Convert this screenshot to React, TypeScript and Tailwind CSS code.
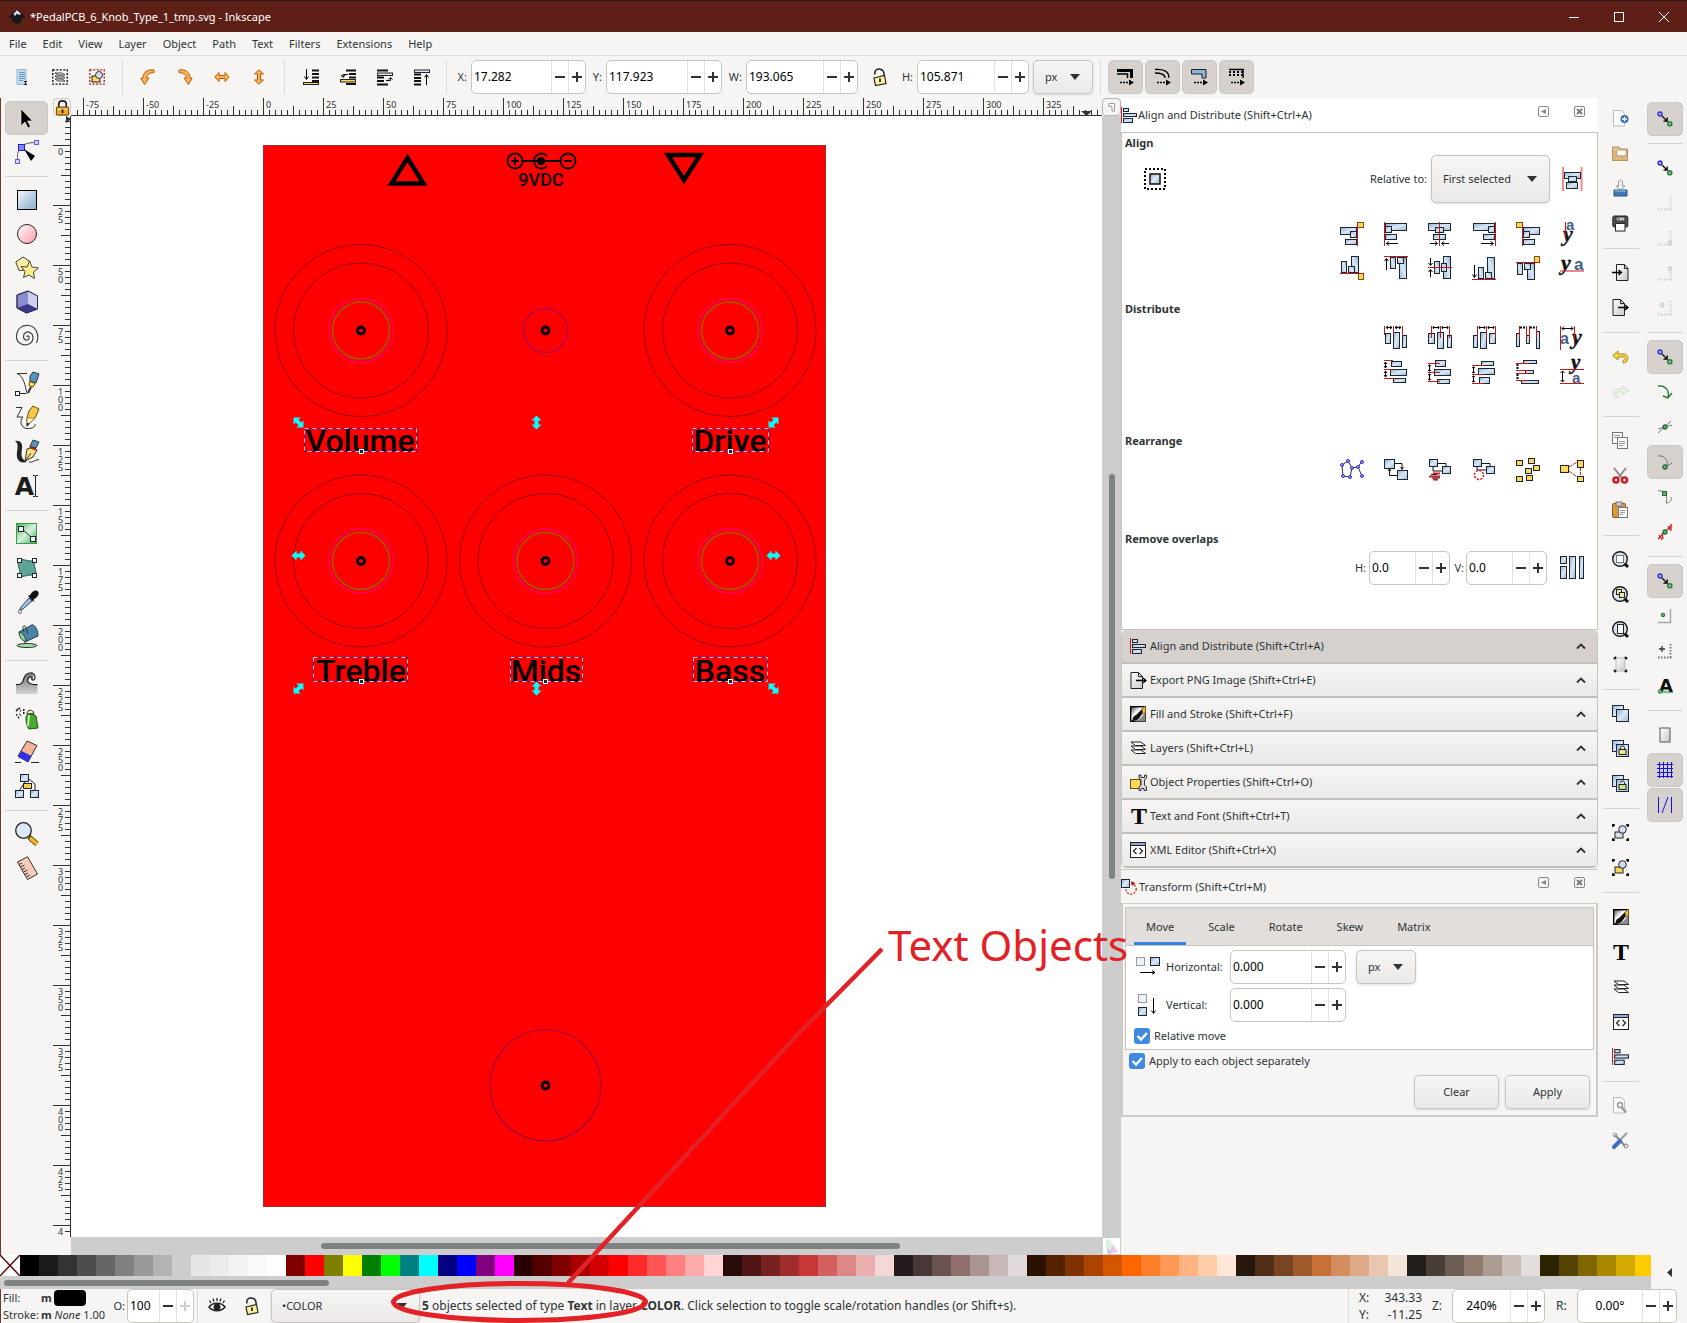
import React from "react";

type Kids = { children?: React.ReactNode };

const BLUE = "url(#g-blue)";
const GREEN = "url(#g-green)";
const YEL = "#ffd65c";
const INK = "#1d2733";
const CRIMSON = "#c01818";

function Defs() {
  return (
    <svg width="0" height="0" className="absolute" aria-hidden="true">
      <defs>
        <linearGradient id="g-blue" x1="0" y1="0" x2="1" y2="1">
          <stop offset="0" stopColor="#8fb0d0" />
          <stop offset="0.5" stopColor="#dbe8f5" />
          <stop offset="1" stopColor="#9dbbd9" />
        </linearGradient>
        <linearGradient id="g-sky" x1="0" y1="0" x2="1" y2="1">
          <stop offset="0" stopColor="#f4f8fc" />
          <stop offset="1" stopColor="#86aacb" />
        </linearGradient>
        <linearGradient id="g-pink" x1="0" y1="0" x2="1" y2="1">
          <stop offset="0" stopColor="#fff" />
          <stop offset="1" stopColor="#ff9aa6" />
        </linearGradient>
        <linearGradient id="g-green" x1="0" y1="0" x2="1" y2="1">
          <stop offset="0" stopColor="#3fae56" />
          <stop offset="0.5" stopColor="#d9f2dc" />
          <stop offset="1" stopColor="#3fae56" />
        </linearGradient>
        <linearGradient id="g-grey" x1="0" y1="0" x2="0" y2="1">
          <stop offset="0" stopColor="#777" />
          <stop offset="1" stopColor="#d2d2d2" />
        </linearGradient>
        <linearGradient id="g-paper" x1="0" y1="0" x2="1" y2="1">
          <stop offset="0" stopColor="#fff" />
          <stop offset="1" stopColor="#c9c9c9" />
        </linearGradient>
        <linearGradient id="g-ink" x1="0" y1="0" x2="1" y2="1">
          <stop offset="0" stopColor="#444" />
          <stop offset="0.4" stopColor="#fff" />
          <stop offset="1" stopColor="#fff" />
        </linearGradient>
      </defs>
    </svg>
  );
}

function Ic({ s = 24, v = 24, children }: Kids & { s?: number; v?: number }) {
  return (
    <svg width={s} height={s} viewBox={`0 0 ${v} ${v}`} fill="none" aria-hidden="true" className="shrink-0 overflow-visible">
      {children}
    </svg>
  );
}

/* x, y, width, height and fill of an outlined box */
function B({ b, f = BLUE, c = INK }: { b: number[]; f?: string; c?: string }) {
  return <rect x={b[0] + 0.5} y={b[1] + 0.5} width={b[2] - 1} height={b[3] - 1} fill={f} stroke={c} />;
}
function Boxes({ bs, f }: { bs: number[][]; f?: string }) {
  return (
    <>
      {bs.map((b, i) => (
        <B key={i} b={b} f={f} />
      ))}
    </>
  );
}

/* ---------- align and distribute glyphs ---------- */
const alignShapes: React.ReactNode[] = [
  <>
    <Boxes bs={[[0, 5, 17, 8], [10, 9, 7, 7], [5, 17, 12, 6]]} />
    <B b={[17, 0, 7, 6]} f={YEL} c="#7a5200" />
    <path d="M17.5 0V24" stroke={CRIMSON} />
  </>,
  <>
    <Boxes bs={[[1, 1, 22, 8], [1, 4, 7, 7], [1, 12, 12, 6]]} />
    <path d="M.5 0V24" stroke={CRIMSON} />
    <path d="M2 21.5H14M5 19.5L2.5 21.5L5 23.5" stroke="#000" />
  </>,
  <>
    <Boxes bs={[[0, 1, 23, 8], [7, 5, 9, 6], [5, 12, 13, 6]]} />
    <path d="M11.5 0V24" stroke={CRIMSON} />
    <path d="M2 21.5H9M14 21.5H21M7 19.5L9.5 21.5L7 23.5M16 19.5L13.5 21.5L16 23.5" stroke="#000" />
  </>,
  <>
    <Boxes bs={[[1, 1, 22, 8], [16, 4, 7, 7], [11, 12, 12, 6]]} />
    <path d="M23.5 0V24" stroke={CRIMSON} />
    <path d="M9 21.5H21M18.5 19.5L21.5 21.5L18.5 23.5" stroke="#000" />
  </>,
  <>
    <Boxes bs={[[7, 5, 17, 8], [7, 9, 7, 7], [7, 17, 12, 6]]} />
    <B b={[0, 0, 7, 6]} f={YEL} c="#7a5200" />
    <path d="M6.5 0V24" stroke={CRIMSON} />
  </>,
];
const distShapes: React.ReactNode[] = [
  <>
    <Boxes bs={[[1, 7, 6, 11], [9, 6, 7, 17], [18, 9, 5, 13]]} />
    <path d="M.5 0V9M9.5 0V9M18.5 0V10" stroke={CRIMSON} />
    <path d="M2 1.5H8M11 1.5H17M4 0L2 1.5L4 3M6 0L8 1.5L6 3M13 0L11 1.5L13 3M15 0L17 1.5L15 3" stroke="#000" />
  </>,
  <>
    <Boxes bs={[[0, 7, 7, 11], [9, 6, 7, 17], [19, 9, 5, 13]]} />
    <path d="M3.5 0V12M12.5 0V12M21.5 0V12" stroke={CRIMSON} />
    <path d="M5 1.5H11M14 1.5H20M6 0L5 1.5L6 3M10 0L11 1.5L10 3M15 0L14 1.5L15 3M19 0L20 1.5L19 3" stroke="#000" />
  </>,
  <>
    <Boxes bs={[[1, 9, 5, 13], [8, 6, 7, 17], [17, 7, 7, 11]]} />
    <path d="M5.5 0V12M14.5 0V12M23.5 0V12" stroke={CRIMSON} />
    <path d="M7 1.5H13M16 1.5H22M8 0L7 1.5L8 3M12 0L13 1.5L12 3M17 0L16 1.5L17 3M21 0L22 1.5L21 3" stroke="#000" />
  </>,
  <>
    <Boxes bs={[[0, 7, 4, 14], [10, 9, 4, 9], [20, 5, 4, 18]]} />
    <path d="M3.5 0V12M10.5 0V12M13.5 0V12M20.5 0V12" stroke={CRIMSON} />
    <path d="M4 1.5H10M14 1.5H20" stroke="#000" strokeWidth="2" strokeDasharray="2 1" />
  </>,
];

function Letters({ items, lines }: { items: [string, number, number, number][]; lines: React.ReactNode }) {
  return (
    <Ic>
      {items.map(([t, x, y, z], i) =>
        t === "a" ? (
          <text key={i} x={x} y={y} fontSize={z} fontWeight="700" fontFamily="Liberation Sans, sans-serif" fill="#3f6189">
            a
          </text>
        ) : (
          <text key={i} x={x} y={y} fontSize={z} fontWeight="700" fontStyle="italic" fontFamily="Liberation Serif, serif" fill="#111" stroke="#111" strokeWidth=".4">
            y
          </text>
        ),
      )}
      {lines}
    </Ic>
  );
}

/* ---------- general glyphs ---------- */
const AlignIcon = ({ s = 16 }: { s?: number }) => (
  <Ic s={s} v={16}>
    <path d="M.5 0V16" stroke="#d01c1c" />
    <Boxes bs={[[2, 1, 6, 4], [2, 6, 14, 4], [2, 11, 10, 5]]} />
  </Ic>
);
const ExportIcon = () => (
  <Ic s={17} v={17}>
    <path d="M1 .5H8.5L12.5 4.5V16.5H1Z" fill="url(#g-paper)" stroke="#222" />
    <path d="M8.5 .5V4.5H12.5" stroke="#222" />
    <path d="M6 8.5H16M13 6L16 8.5L13 11" stroke="#000" strokeWidth="1.3" />
  </Ic>
);
const ImportIcon = () => (
  <Ic s={17} v={17}>
    <path d="M4.5 .5H12.5L16 4.5V16.5H4.5Z" fill="url(#g-paper)" stroke="#222" />
    <path d="M12.5 .5V4.5H16" stroke="#222" />
    <path d="M0 8.5H9M6.5 6L9.5 8.5L6.5 11" stroke="#000" strokeWidth="1.3" />
  </Ic>
);
const FillIcon = () => (
  <Ic s={16} v={16}>
    <rect x=".7" y=".7" width="14.6" height="14.6" fill="url(#g-ink)" stroke="#000" strokeWidth="1.4" />
    <path d="M1 15.500C4 14 1.500 10.500 6 9L13 2L15 4L10 11C8 14.500 5 14.500 1 15.500Z" fill="#111" />
    <path d="M15.500 5V15.500H4C9 14.500 12 11 15.500 5Z" fill="#8a8a8a" />
    <path d="M12 3.500L15.500 0V6L13 8Z" fill="#f0c040" stroke="#7a5200" strokeWidth=".6" />
  </Ic>
);
const LayersIcon = () => (
  <Ic s={16} v={16}>
    {[10, 6, 2].map((y) => (
      <path key={y} d={`M1 ${y}H11L15.5 ${y + 3.5}H5.5Z`} fill="#fff" stroke="#222" strokeLinejoin="round" />
    ))}
  </Ic>
);
const PropsIcon = () => (
  <Ic s={17} v={17}>
    <B b={[0, 5, 11, 10]} f="#ffd75a" c="#6b4b00" />
    <path d="M9 1V4L11 6V11L9 13V16.5H11V14.5H14V16.5H16.5V13L14.5 11V6L16.5 4V1H14.5V3.5H11V1Z" fill="#ddd" stroke="#333" />
  </Ic>
);
const TIcon = () => (
  <Ic s={18} v={18}>
    <text x="9" y="17" fontSize="24" fontWeight="700" textAnchor="middle" fontFamily="Liberation Serif, serif" fill="#000">
      T
    </text>
  </Ic>
);
const XmlIcon = () => (
  <Ic s={16} v={16}>
    <rect x=".5" y=".5" width="15" height="15" fill="#fdfdfd" stroke="#222" />
    <path d="M1 2H15" stroke="#90a8d8" strokeWidth="2" />
    <path d="M0 3.5H16" stroke="#222" />
    <path d="M6.5 6L3.5 9L6.5 12M9.5 6L12.5 9L9.5 12" stroke="#222" strokeWidth="1.2" />
  </Ic>
);
const TransformIcon = () => (
  <Ic s={17} v={17}>
    <circle cx="10" cy="11" r="5.2" stroke="#d01c1c" strokeDasharray="2 1.4" strokeWidth="1.2" />
    <B b={[0, 1, 9, 9]} />
    <path d="M10 3L14 5L11.5 8Z" fill="#b00" />
  </Ic>
);
const Padlock = ({ s = 18, open }: { s?: number; open?: boolean }) => (
  <Ic s={s} v={18}>
    {open ? (
      <>
        <path d="M4 6.5C3 2 6 .8 8.5 1C12 1.5 13.5 4 13 8" stroke="#222" strokeWidth="1.5" />
        <path d="M3 10L13.5 7.5L15 15.5L4.5 17.5Z" fill="#fbf1a0" stroke="#222" strokeWidth="1.2" />
        <path d="M9 10.5V14" stroke="#222" strokeWidth="1.8" />
      </>
    ) : (
      <>
        <path d="M5 9V5.5C5 .8 13 .8 13 5.5V9" stroke="#222" strokeWidth="1.8" />
        <rect x="2.5" y="8.5" width="13" height="8.5" rx="1" fill="#f2a92c" stroke="#5a3600" />
        <path d="M3.5 11H14.5" stroke="#ffe9a0" />
        <path d="M9 11V15" stroke="#222" strokeWidth="2" />
      </>
    )}
  </Ic>
);
const SnapGlyph = () => (
  <Ic s={16} v={16}>
    <circle cx="3" cy="3" r="2" fill="#a9a9ff" stroke="#3030d0" strokeWidth="1.4" />
    <circle cx="12.8" cy="12.8" r="2.1" fill="#7fc08f" stroke="#2a7a3c" strokeWidth="1.4" />
    <path d="M5 5L9.5 9.5M6.5 10.2H10.2V6.5" stroke="#000" strokeWidth="1.3" />
  </Ic>
);
const Corner = ({ x, y, faint = true, children }: Kids & { x?: number; y?: number; faint?: boolean }) => (
  <Ic s={16} v={16}>
    <g opacity={faint ? 0.28 : 1}>
      <path d="M1 14.5H14.5M13.5 1V14" stroke="#777" strokeWidth="2" strokeDasharray="1.6 1.4" />
      {x !== undefined && y !== undefined && <circle cx={x} cy={y} r="2" fill="#7fc08f" stroke="#2a7a3c" />}
    </g>
    {children}
  </Ic>
);
const Lens = ({ children }: Kids) => (
  <Ic s={17} v={17}>
    <circle cx="8" cy="8" r="7.3" fill="#d6e4f2" stroke="#1a1a1a" strokeWidth="1.4" />
    <path d="M12.5 12.5L16 16" stroke="#111" strokeWidth="3" />
    {children}
  </Ic>
);
const Clones = ({ children }: Kids) => (
  <Ic s={17} v={17}>
    <Boxes bs={[[0, 0, 12, 12], [4, 4, 13, 13]]} />
    {children}
  </Ic>
);
const GroupIcon = ({ f }: { f: string }) => (
  <Ic s={17} v={17}>
    <path d="M0 1H3M0 16H3M14 1H17M14 16H17M1 0V3M16 0V3M1 14V17M16 14V17" stroke="#000" strokeWidth="1.5" />
    <rect x="3" y="8" width="8" height="6" fill={f} stroke="#222" />
    <circle cx="10.5" cy="5.5" r="3.8" fill="#cfdfee" stroke="#222" />
  </Ic>
);
const MiniDot = () => <circle cx="8" cy="8" r="2" fill="#5fb572" stroke="#1f6b31" strokeWidth="1.3" />;

/* ---------- toolbox ---------- */
const tools: (null | [string, React.ReactNode])[] = [
  ["Select", <path d="M6 3V20L10 16L13 22L15.500 20.500L12.500 15H17.500Z" fill="#000" stroke="#fff" strokeWidth=".6" />],
  ["Edit nodes", <>
    <path d="M2.500 20C2 10 4 3 20 2.500" stroke="#555" />
    <B b={[3, 4, 7, 7]} f="#7c84f0" c="#2020c8" />
    <B b={[19, 0, 5, 5]} f="#d5d5ff" c="#6060e0" />
    <B b={[0, 19, 5, 5]} f="#d5d5ff" c="#6060e0" />
    <path d="M9 9L20 16L16 21Z" fill="#000" />
  </>],
  null,
  ["Rectangle", <rect x="2.500" y="2.500" width="19" height="19" fill="url(#g-sky)" stroke="#000" />],
  ["Ellipse", <circle cx="12" cy="12" r="9.500" fill="url(#g-pink)" stroke="#222" />],
  ["Star", <>
    <path d="M.8 6L8 1L15 5.500L12.500 14L4 14.500Z" fill="#fbf0a8" stroke="#444" />
    <path d="M14.500 5L17 11L23.500 12L18.500 16L19.500 22.500L14 19L8.500 21.500L10 15.500L6 10.500L12 11Z" fill="#fbec8c" stroke="#444" />
  </>],
  ["3D box", <>
    <path d="M2 5L13 1L22.500 6V19L11.500 23L2 18Z" fill="#8c8cd0" stroke="#333358" />
    <path d="M13 1L22.500 6V19L13 14Z" fill="#cfcff2" />
    <path d="M2 18L13 14L22.500 19L11.500 23Z" fill="#3a3a88" />
    <path d="M2 5L13 1L22.500 6V19L11.500 23L2 18Z" stroke="#333358" />
  </>],
  ["Spiral", <path d="M12 13C12 11 15 12 14 14.500C13 17 8.500 16.500 8.500 12.500C8.500 8.500 12 7 15 8.500C19 10.500 19 17 15 19.500C9 23 1 19 1.500 12C2 4 8 .5 14 1.500C22 3 24.500 12 21.500 19" stroke="#444" strokeWidth="1.200" />],
  null,
  ["Bezier pen", <>
    <path d="M2 1.500H12M2 1.500C9 4 10 14 12 21.500" stroke="#333" />
    <path d="M5 21.500H11" stroke="#222" /><B b={[0, 19, 5, 5]} f="#fff" />
    <path d="M15 4L18 0L24 2L21 11L15 9Z" fill="#5a94b8" stroke="#1d3f55" />
    <path d="M14.500 9.500L20 11.500L18 15L14 13.500Z" fill="#ffe35a" stroke="#6b5200" /><path d="M16 15L13 21" stroke="#333" strokeWidth="2" />
  </>],
  ["Pencil", <>
    <path d="M1 1.500H7L2 11H8C4 15 6 22 12 22.500C18 23 21 20 20 18" stroke="#333" />
    <path d="M14 5L18 0L24 3L20 12L12 20V12Z" fill="#f7c948" stroke="#6b4b00" />
    <path d="M12 12L20 12L12 20Z" fill="#fdf3dd" stroke="#6b4b00" strokeWidth=".6" /><path d="M12 17V20.500L15 17.500Z" fill="#222" />
  </>],
  ["Calligraphy", <>
    <path d="M0 1C5 0 8 3 7 9C6 15 6 19 12 22C4 24 1 19 2 12C3 6 3 3 0 1Z" fill="#222" />
    <path d="M14 22C18 23 19 20 24 19.500" stroke="#333" />
    <path d="M12 9L18 7L22 10L18 17L10 21Z" fill="#fbe17a" stroke="#333" /><path d="M15 6L18 0L24 2L21 8Z" fill="#5a94b8" stroke="#1d3f55" /><path d="M14.500 7L21 9.500" stroke="#b02020" strokeWidth="2" /><path d="M11 20L16 13" stroke="#333" />
  </>],
  ["Text", <>
    <text x="9.500" y="21" fontSize="25" fontWeight="700" textAnchor="middle" fontFamily="DejaVu Sans, sans-serif" fill="#1c1c1c">A</text>
    <path d="M20.500 2V22M18 1.500H20L20.500 2L21 1.500H23M18 22.500H20L20.500 22L21 22.500H23" stroke="#222" />
  </>],
  null,
  ["Gradient", <>
    <rect x="1.500" y="1.500" width="20" height="20" fill={GREEN} stroke="#3c9b50" />
    <path d="M6 6L18 17" stroke="#333" /><B b={[3, 4, 6, 6]} f="#fff" /><B b={[15, 14, 6, 6]} f="#fff" />
  </>],
  ["Mesh", <>
    <path d="M4 4C9 2 14 7 20 4C17 10 23 14 20 20C14 17 9 22 4 20C7 14 1 10 4 4Z" fill="#5fa596" stroke="#33584f" />
    <Boxes bs={[[2, 2, 5, 5], [17, 2, 5, 5], [2, 17, 5, 5], [17, 17, 5, 5]]} f="#fff" />
  </>],
  ["Dropper", <>
    <path d="M14 8L17 11L8 19L5 20.500L6 17Z" fill="#9cc3e8" stroke="#2f4660" />
    <path d="M13 6L15 5C17 1 21 -1 23 1.500C25 4 22 8 19 9L18.500 12Z" fill="#111" />
    <path d="M5 19C3 21.500 3 24 5.500 23.500C7.500 23 6.500 21 5 19Z" fill="#d4e6f5" stroke="#444" strokeWidth=".8" />
  </>],
  ["Bucket", <>
    <ellipse cx="12" cy="21.500" rx="10" ry="2" fill="#9fe0a8" stroke="#333" />
    <path d="M4 8L17 .8C20 .8 23 6 23 12L11 17.500Z" fill="#4a85a8" stroke="#1d3f55" /><path d="M4 8C7 8 11 13 11 17.500C7 17 4 13 4 8Z" fill="#8fd49a" stroke="#333" />
    <path d="M9 8C7 3 8 1 10 2C12 4 12 8 13 10M10 17V20" stroke="#333" />
  </>],
  null,
  ["Tweak", <>
    <path d="M1 12.500C8 13 8 9 9 6C11 1 16 0 18 3C19 5 18 8 16.500 7C18 5 15 4 13.500 6C11 9 13 13 22.500 12.500V22H1Z" fill="url(#g-grey)" />
    <path d="M1 12.500C8 13 8 9 9 6C11 0 19 -1 20 5C20 8 18 9 16.500 7C18 5 15 4 13.500 6C11 9 13 13 22.500 12.500" stroke="#222" strokeWidth="1.200" />
  </>],
  ["Spray", <>
    <path d="M1 5L5 2M2 3L6 5M8 4H10M1 9L5 8M3 12L6 9M8 7H10" stroke="#222" strokeWidth="1.800" strokeDasharray="1.500 2" />
    <path d="M12 9C10 9 11 20 14 23L23 22L21 10C19 8 14 8 12 9Z" fill="#4aa832" stroke="#1d5c10" /><path d="M14 9L13 20" stroke="#bdf0a8" strokeWidth="2" /><path d="M12 8C12 3 18 3 19 7.500Z" fill="#f1e6b0" stroke="#333" />
  </>],
  ["Eraser", <>
    <path d="M12 1L22 5.500L13 22L3 16Z" fill="#f3b399" stroke="#333" /><path d="M6.500 11L16.500 16L13 22L3 17Z" fill="#3030e0" />
    <path d="M0 22.500H6M16 22.500H24" stroke="#222" />
  </>],
  ["Connector", <>
    <path d="M10 8L4 17M13 4L20 10V17" stroke="#222" />
    <Boxes bs={[[5, 0, 9, 8], [0, 16, 9, 8], [15, 16, 9, 8]]} /><B b={[8, 9, 9, 6]} f="#f6cc4a" />
  </>],
  null,
  ["Zoom", <>
    <path d="M14 15L22 22" stroke="#6b4b00" strokeWidth="5" /><path d="M15 16L22 22" stroke="#f5b630" strokeWidth="3.500" />
    <circle cx="8.500" cy="8.500" r="7.800" fill="#dde9f5" stroke="#222" strokeWidth="1.300" />
  </>],
  ["Measure", <>
    <path d="M2.500 6L12.500 .8L22.500 18L12.500 23.500Z" fill="#f6cdb8" stroke="#333" />
    <path d="M4 8.500L7 7M5.500 11L9.500 9M7 13.500L10 12M8.500 16L12.500 14M10 18.500L13 17M11.500 21L15 19" stroke="#333" />
  </>],
];

/* ---------- command bar ---------- */
const commands: (null | [string, React.ReactNode])[] = [
  ["New", <Ic s={17} v={17}><path d="M1.500 .5H9.500L12.500 3.500V16H1.500Z" fill="#fcfcfc" stroke="#bbb" /><circle cx="12.500" cy="9" r="4" fill="#2f6fb5" /><path d="M10 9H15M12.500 6.500V11.500" stroke="#fff" strokeWidth="1.300" /></Ic>],
  ["Open", <Ic s={17} v={17}><path d="M.5 2H7L8 4H15.500V15.500H.5Z" fill="#e3c08c" stroke="#b58e58" /><path d="M6 5H14V11H4V7Z" fill="#fafafa" stroke="#b0a080" strokeWidth=".8" /><path d="M.5 7V15.500H15.500V11H5V7Z" fill="#dcb67e" stroke="#b58e58" strokeWidth=".6" /></Ic>],
  ["Save", <Ic s={17} v={17}><path d="M6.500 1V6H4L8.500 10L13 6H10.500V1C9 -.2 8 -.2 6.500 1Z" fill="#eee" stroke="#999" /><path d="M2 10H15V16H2Z" fill="#3f79b8" stroke="#2a5688" /><path d="M3 11H14" stroke="#a8c8e8" /></Ic>],
  ["Print", <Ic s={17} v={17}><rect x=".8" y="1" width="15" height="11" rx="1.500" fill="#555" stroke="#222" /><rect x="4" y="2" width="9" height="4" fill="#ddd" stroke="#222" /><rect x="3.500" y="8.500" width="9.500" height="7.500" fill="#fff" stroke="#222" /><path d="M5 4H8M10 4H11" stroke="#333" /></Ic>],
  null,
  ["Import", <ImportIcon />],
  ["Export", <ExportIcon />],
  null,
  ["Undo", <Ic s={17} v={17}><path d="M6 3L.8 7.500L6 12V9H12C14 9 14 12 11 12.500V15C17 15 17.500 6 12 6H6Z" fill="#f3d54e" stroke="#b08a10" /></Ic>],
  ["Redo", <Ic s={17} v={17}><path opacity=".35" d="M11 3L16.200 7.500L11 12V9H5C3 9 3 12 6 12.500V15C0 15 -.5 6 5 6H11Z" fill="#d5ecd0" stroke="#86b37c" /></Ic>],
  null,
  ["Copy", <Ic s={17} v={17}><B b={[0, 0, 11, 12]} f="#fff" c="#777" /><B b={[5, 5, 11, 12]} f="#fff" c="#777" /><path d="M2 3.500H8M2 5.500H5M7 9.500H13M7 11.500H13M7 13.500H11" stroke="#999" /></Ic>],
  ["Cut", <Ic s={17} v={17}><path d="M2 1L10 11M14 1L6 11" stroke="#8b8b8b" strokeWidth="2" /><circle cx="4" cy="13" r="2.500" stroke="#cc1f2a" strokeWidth="2.500" /><circle cx="12.500" cy="13" r="2.500" stroke="#cc1f2a" strokeWidth="2.500" /></Ic>],
  ["Paste", <Ic s={17} v={17}><rect x=".5" y="1.500" width="13" height="14" rx="1" fill="#d99a3e" stroke="#8a5a18" /><rect x="4" y="0" width="6" height="4" fill="#ccc" stroke="#777" /><B b={[6, 5, 10, 11]} f="#fff" c="#777" /><path d="M8 8.500H13M8 10.500H13M8 12.500H11" stroke="#999" /></Ic>],
  null,
  ["Zoom selection", <Lens><rect x="4.500" y="4.500" width="7" height="7" fill="#fff" stroke="#000" strokeDasharray="1 1" /></Lens>],
  ["Zoom drawing", <Lens><B b={[4, 3, 6, 6]} f="#fbe98a" /><B b={[7, 6, 6, 6]} f="#fbe98a" /></Lens>],
  ["Zoom page", <Lens><B b={[5, 3, 7, 10]} f="#fff" /></Lens>],
  ["Zoom width", <Ic s={17} v={17}><rect x="4" y="2" width="9" height="13" fill="url(#g-paper)" stroke="#bbb" /><path d="M2 3L4 1M15 3L13 1M2 14L4 16M15 14L13 16" stroke="#111" strokeWidth="2.200" /></Ic>],
  null,
  ["Duplicate", <Clones />],
  ["Clone", <Clones><rect x="7" y="9.500" width="7" height="5" fill="#f5e37a" stroke="#222" /><path d="M8.500 9V7.500C8.500 5.500 12.500 5.500 12.500 7.500V9" stroke="#222" /></Clones>],
  ["Unlink clone", <Clones><rect x="7" y="9.500" width="7" height="5" fill="#cfe08a" stroke="#222" /><path d="M8.500 7.500C8.500 5.500 12.500 5.500 12.500 7.500V9" stroke="#222" /></Clones>],
  null,
  ["Group", <GroupIcon f="#cfdfee" />],
  ["Ungroup", <GroupIcon f="#f6d45a" />],
  null,
  ["Fill and Stroke", <FillIcon />],
  ["Text and Font", <TIcon />],
  ["Layers", <LayersIcon />],
  ["XML Editor", <XmlIcon />],
  ["Align and Distribute", <AlignIcon s={17} />],
  null,
  ["Document properties", <Ic s={17} v={17}><path d="M1.500 .5H9.500L12.500 3.500V16H1.500Z" fill="#fafafa" stroke="#bbb" /><circle cx="8" cy="8" r="2.500" stroke="#999" strokeWidth="1.500" /><path d="M9.500 10L14 15.500" stroke="#999" strokeWidth="2.500" /></Ic>],
  ["Preferences", <Ic s={17} v={17}><path d="M3 3L13 14" stroke="#888" strokeWidth="2.200" /><circle cx="3" cy="3" r="2" stroke="#999" /><circle cx="14" cy="14" r="2" stroke="#888" /><path d="M15 1L8 8" stroke="#999" strokeWidth="2" /><path d="M8 9L2 15" stroke="#3d6ec0" strokeWidth="4" strokeLinecap="round" /></Ic>],
];

/* ---------- snap bar: name, glyph, pressed ---------- */
const snaps: (null | [string, React.ReactNode, boolean?])[] = [
  ["Snap", <SnapGlyph />, true],
  null,
  ["Snap bounding boxes", <SnapGlyph />],
  ["Snap edges", <Corner />],
  ["Snap corners", <Corner x={13} y={13} />],
  ["Snap edge midpoints", <Corner x={13} y={4} />],
  ["Snap centers", <Corner x={5} y={5} />],
  null,
  ["Snap nodes", <SnapGlyph />, true],
  ["Snap paths", <Ic s={16} v={16}><path d="M1 2C8 1 13 6 11 14M6 12L11 14L15 9" stroke="#227a2a" strokeWidth="1.400" /></Ic>],
  ["Snap intersections", <Ic s={16} v={16}><path d="M1 14L14 2M1 10L15 6" stroke="#777" /><MiniDot /></Ic>],
  ["Snap cusp nodes", <Ic s={16} v={16}><path d="M1 2C6 1 12 5 10 12L15 9" stroke="#777" /><circle cx="8" cy="13" r="2" fill="#5fb572" stroke="#1f6b31" strokeWidth="1.300" /></Ic>, true],
  ["Snap smooth nodes", <Ic s={16} v={16}><path d="M1 2C9 0 11 9 9 14C13 14 15 11 14 8" stroke="#777" /><B b={[5, 2, 5, 5]} f="#5fb572" c="#1f6b31" /></Ic>],
  ["Snap line midpoints", <Ic s={16} v={16}><path d="M2 11L5 16M5 9L6 15M1 15L6 10M10 6L15 1M11 2L14 7M14 0V6" stroke="#c22" strokeWidth="1.300" /><MiniDot /></Ic>],
  null,
  ["Snap others", <SnapGlyph />, true],
  ["Snap object centers", <Ic s={16} v={16}><path d="M1 14.500H13.500V1" stroke="#aaa" strokeWidth="1.500" /><circle cx="6" cy="7" r="1.800" fill="#5fb572" stroke="#1f6b31" /></Ic>],
  ["Snap rotation centers", <Corner faint={false}><path d="M2 6H8M5 3V9" stroke="#333" strokeWidth="1.300" /></Corner>],
  ["Snap text baselines", <Ic s={16} v={16}><path d="M2 14H16" stroke="#7fc08f" strokeWidth="2.500" /><text x="9" y="14" fontSize="18" fontWeight="700" textAnchor="middle" fontFamily="DejaVu Sans, sans-serif" fill="#111">A</text><circle cx="3" cy="13.500" r="1.800" fill="#7fc08f" stroke="#2a7a3c" /></Ic>],
  null,
  ["Snap page border", <Ic s={16} v={16}><rect x="3" y="1" width="10" height="14" fill="url(#g-paper)" stroke="#555" /></Ic>],
  ["Snap grids", <Ic s={16} v={16}><path d="M2.500 0V16M6.500 0V16M10.500 0V16M14.500 0V16M0 2.500H16M0 6.500H16M0 10.500H16M0 14.500H16" stroke="#1414d8" /></Ic>, true],
  ["Snap guides", <Ic s={16} v={16}><path d="M1.500 0V16M14.500 0V16M11 0L5 16" stroke="#1414d8" /></Ic>, true],
];

/* ---------- controls ---------- */
function Spin({ id, value, w, dim, right }: { id: string; value: string; w: string; dim?: boolean; right?: boolean }) {
  return (
    <div className={`flex h-[34px] shrink-0 overflow-hidden rounded-[5px] border border-[#c8c4bf] bg-white ${w}`}>
      <input id={id} defaultValue={value} className={`min-w-0 flex-1 bg-transparent px-[2px] text-[12px] text-black outline-none ${right ? "text-center" : ""}`} />
      <button aria-label={`Decrease ${id}`} className="flex w-[17px] shrink-0 items-center justify-center border-l border-[#e4e2df]">
        <Ic s={10} v={10}><path d="M0 5H10" stroke="#2e3436" strokeWidth="2" /></Ic>
      </button>
      <button aria-label={`Increase ${id}`} className="flex w-[17px] shrink-0 items-center justify-center border-l border-[#e4e2df]">
        <Ic s={10} v={10}><path d="M0 5H10M5 0V10" stroke={dim ? "#d0cecb" : "#2e3436"} strokeWidth="2" /></Ic>
      </button>
    </div>
  );
}
function Drop({ label, value, box, pad = "pl-[11px]" }: { label: string; value: string; box: string; pad?: string }) {
  return (
    <div className={`relative shrink-0 rounded-[5px] border border-[#c8c4bf] bg-gradient-to-b from-[#f7f6f5] to-[#ebe9e7] text-[11px] shadow-sm ${box}`}>
      <select aria-label={label} className={`h-full w-full appearance-none bg-transparent outline-none ${pad}`}>
        <option>{value}</option>
      </select>
      <svg width="10" height="6" className="pointer-events-none absolute right-3 top-1/2 -mt-[3px]" aria-hidden="true">
        <path d="M0 0H10L5 6Z" fill="#2e3436" />
      </svg>
    </div>
  );
}
function VSep() {
  return <div className="h-[34px] w-px shrink-0 bg-[#dcdad7]" />;
}
function SideBar({ items, className }: { items: (null | [string, React.ReactNode, boolean?])[]; className: string }) {
  return (
    <div className={`flex shrink-0 flex-col items-center pt-[3px] ${className}`}>
      {items.map((it, i) =>
        it === null ? (
          <div key={i} className="flex h-[14px] w-9 shrink-0 items-center"><div className="h-px w-full bg-[#d6d3cf]" /></div>
        ) : (
          <div key={i} className="flex h-[35px] shrink-0 items-center">
            <button aria-label={it[0]} className={`flex h-[34px] w-9 items-center justify-center rounded-[5px] ${it[2] ? "border border-[#ccc7c2] bg-[#d6d1cd]" : ""}`}>{it[1]}</button>
          </div>
        ),
      )}
    </div>
  );
}
function PanelHead({ icon, title, className }: { icon: React.ReactNode; title: string; className: string }) {
  return (
    <div className={`flex h-[34px] shrink-0 items-center pr-3 ${className}`}>
      {icon}
      <span className="flex-1 pl-px">{title}</span>
      <button aria-label={`Iconify ${title}`} className="mb-2 mr-[25px]">
        <Ic s={11} v={11}><rect x=".5" y=".5" width="10" height="10" rx="1.5" stroke="#888" /><path d="M8 3V8L3 5.500Z" fill="#888" /></Ic>
      </button>
      <button aria-label={`Close ${title}`} className="mb-2 mr-[1px]">
        <Ic s={11} v={11}><rect x=".5" y=".5" width="10" height="10" rx="1.5" stroke="#888" /><path d="M3 3L8 8M8 3L3 8" stroke="#777" strokeWidth="1.8" /></Ic>
      </button>
    </div>
  );
}
function IconRow({ items, className = "" }: { items: [string, React.ReactNode][]; className?: string }) {
  return (
    <div className={`flex h-[34px] justify-end pr-[3px] ${className}`}>
      {items.map(([n, g]) => (
        <button key={n} aria-label={n} className="flex w-11 items-center justify-center">{g}</button>
      ))}
    </div>
  );
}

/* ---------- rulers ---------- */
function HRuler() {
  const ticks = Array.from({ length: 172 }, (_, i) => i - 31);
  return (
    <svg className="h-full w-full overflow-hidden" aria-hidden="true">
      {ticks.map((t) => (
        <path key={t} d={`M${192.5 + t * 6} ${t % 10 === 0 ? 0 : t % 5 === 0 ? 8 : 12}V17`} stroke="#2e3436" />
      ))}
      <path d="M0 17.5H2000" stroke="#2e3436" />
      {ticks.filter((t) => t % 10 === 0 && t < 140).map((t) => (
        <text key={t} x={195 + t * 6} y="10" fontSize="9" fill="#2e3436">{t * 2.5}</text>
      ))}
      <path d="M1010 13H1021L1015.500 18Z" fill="#2e3436" />
    </svg>
  );
}
function VRuler() {
  const ticks = Array.from({ length: 187 }, (_, i) => i - 4);
  const digits = ticks
    .filter((t) => t >= 0 && t % 10 === 0)
    .flatMap((t) => String(t * 2.5).split("").map((d, i) => ({ d, y: 39 + t * 6 + i * 8 })))
    .filter((d) => d.y < 1121);
  return (
    <svg className="h-full w-full overflow-hidden" aria-hidden="true">
      {ticks.map((t) => (
        <path key={t} d={`M${t % 10 === 0 ? 0 : t % 5 === 0 ? 8 : 12} ${29.5 + t * 6}H17`} stroke="#2e3436" />
      ))}
      <path d="M17.5 0V2000" stroke="#2e3436" />
      {digits.map(({ d, y }) => (
        <text key={y} x="5" y={y} fontSize="9" fill="#2e3436">{d}</text>
      ))}
      <path d="M13 0V7L18 3Z" fill="#2e3436" />
    </svg>
  );
}

/* ---------- drawing ---------- */
function Knob({ x, y }: { x: number; y: number }) {
  return (
    <g>
      <circle cx={x} cy={y} r="86" stroke="#980000" />
      <circle cx={x} cy={y} r="67.500" stroke="#980000" />
      <circle cx={x} cy={y} r="32" stroke="#f5005a" strokeWidth="1.5" />
      <circle cx={x} cy={y} r="28.500" stroke="#a05a00" strokeWidth="1.5" />
      <circle cx={x} cy={y} r="3.500" stroke="#000" strokeWidth="2.800" />
    </g>
  );
}
const labels: { t: string; c: number; a: number; box: number[]; base: number }[] = [
  { t: "Volume", c: 97, a: 98, box: [41, 284, 112, 23], base: 307 },
  { t: "Drive", c: 467, a: 467, box: [429, 284, 76, 23], base: 307 },
  { t: "Treble", c: 98, a: 98, box: [50, 513, 94, 24], base: 537 },
  { t: "Mids", c: 283, a: 282, box: [247, 513, 72, 24], base: 537 },
  { t: "Bass", c: 467, a: 467, box: [430, 513, 74, 24], base: 537 },
];
const handles = [
  [35, 277, 45], [273, 277, 90], [510, 277, -45],
  [35, 410, 0], [510, 410, 0],
  [35, 543, -45], [273, 543, 90], [510, 543, 45],
];
function Drawing() {
  return (
    <svg className="h-full w-full overflow-hidden bg-white" fill="none" role="img" aria-label="Pedal drill template">
      <g transform="translate(192 29)">
        <rect x=".5" y=".5" width="562" height="1061" fill="#ff0000" stroke="#a03030" />
        <path d="M144.500 13L128.500 38.500H160.500Z M405 10H437L421 35Z" stroke="#000" strokeWidth="4.500" />
        <circle cx="252" cy="16" r="7.500" stroke="#000" strokeWidth="1.800" />
        <path d="M248 16H256M252 12V20M260 16H298M301 16H309" stroke="#000" strokeWidth="1.800" />
        <path d="M284 11A7.500 7.500 0 1 0 284 21" stroke="#000" strokeWidth="1.800" />
        <circle cx="278" cy="16" r="4" fill="#000" />
        <circle cx="305" cy="16" r="7.500" stroke="#000" strokeWidth="1.800" />
        <text x="278" y="41" fontSize="18" fontWeight="500" textAnchor="middle" fontFamily="Roboto, sans-serif" fill="#000">9VDC</text>
        <Knob x={98} y={185.5} />
        <Knob x={467} y={185.5} />
        <Knob x={98} y={416} />
        <Knob x={282.5} y={416} />
        <Knob x={467} y={416} />
        <circle cx="282.5" cy="185.5" r="22" stroke="#a00060" strokeWidth="1.200" />
        <circle cx="282.5" cy="185.5" r="3.500" stroke="#000" strokeWidth="2.800" />
        <circle cx="282.5" cy="940.5" r="55.500" stroke="#a00040" strokeWidth="1.200" />
        <circle cx="282.5" cy="940.5" r="3.500" stroke="#000" strokeWidth="2.800" />
        {labels.map((l) => (
          <g key={l.t}>
            <text x={l.c} y={l.base} fontSize="32" fontWeight="500" textAnchor="middle" fontFamily="Roboto, sans-serif" fill="#000">{l.t}</text>
            <rect x={l.box[0] + 0.5} y={l.box[1] - 0.5} width={l.box[2]} height={l.box[3]} stroke="#3a1080" />
            <rect x={l.box[0] + 0.5} y={l.box[1] - 0.5} width={l.box[2]} height={l.box[3]} stroke="#e8c8e0" strokeDasharray="4 4" />
            <rect x={l.a - 1.5} y={l.base - 2.5} width="4" height="4" fill="#223" stroke="#fff" />
          </g>
        ))}
        {handles.map(([x, y, r], i) => (
          <path key={i} d="M-7 0L-2 -5V-2H2V-5L7 0L2 5V2H-2V5Z" transform={`translate(${x + 0.5} ${y + 0.5}) rotate(${r})`} fill="#00ffff" />
        ))}
      </g>
    </svg>
  );
}

const palette =
  "000000 1a1a1a 333333 4d4d4d 666666 808080 999999 b3b3b3 cccccc e6e6e6 ececec f2f2f2 f9f9f9 ffffff 800000 ff0000 808000 ffff00 008000 00ff00 008080 00ffff 000080 0000ff 800080 ff00ff 2b0000 550000 800000 aa0000 d40000 ff0000 ff2a2a ff5555 ff8080 ffaaaa ffd5d5 280b0b 501616 782121 a02c2c c83737 d35f5f de8787 e9afaf f4d7d7 241c1c 483737 6c5353 916f6f ac9393 c8b7b7 e3dbdb 2b1100 552200 803300 aa4400 d45500 ff6600 ff7f2a ff9955 ffb380 ffccaa ffe6d5 28170b 502d16 784421 a05a2c c87137 d38d5f deaa87 e9c6af f4e3d7 241f1c 483e37 6c5d53 917c6f ac9d93 c8beb7 e3dedb 2b2200 554400 806600 aa8800 d4aa00 ffcc00".split(" ");

const menus = ["File", "Edit", "View", "Layer", "Object", "Path", "Text", "Filters", "Extensions", "Help"];

const docked: [string, React.ReactNode][] = [
  ["Align and Distribute (Shift+Ctrl+A)", <AlignIcon />],
  ["Export PNG Image (Shift+Ctrl+E)", <ExportIcon />],
  ["Fill and Stroke (Shift+Ctrl+F)", <FillIcon />],
  ["Layers (Shift+Ctrl+L)", <LayersIcon />],
  ["Object Properties (Shift+Ctrl+O)", <PropsIcon />],
  ["Text and Font (Shift+Ctrl+T)", <TIcon />],
  ["XML Editor (Shift+Ctrl+X)", <XmlIcon />],
];

const orders: [string, React.ReactNode][] = [
  ["Lower to bottom", <><path d="M9 1.500H16M9 5H16M9 8.500H16M9 12H16" stroke="#111" strokeWidth="2" /><path d="M3.500 0V10M1.500 7.500L3.500 10.500L5.500 7.500" stroke="#000" /><rect x=".5" y="13.500" width="15" height="2" fill={YEL} stroke="#222" /></>],
  ["Lower", <><path d="M6 1.500H16M9 5H16M9 8.500H16M6 15H16" stroke="#111" strokeWidth="2" /><path d="M8 5.500H3V8M1 6L3 8.500L5 6" stroke="#000" /><rect x=".5" y="10.500" width="15" height="2.500" fill={YEL} stroke="#222" /></>],
  ["Raise", <><path d="M0 1.500H11M0 8.500H7M0 12H7M0 15.500H11" stroke="#111" strokeWidth="2" /><path d="M0 5H2" stroke="#111" strokeWidth="2" /><rect x=".5" y="4" width="15" height="2.500" fill="#dce8f4" stroke="#222" /><path d="M9 11.500H13.500V9M11.500 10.500L13.500 8.500L15.500 10.500" stroke="#000" /></>],
  ["Raise to top", <><path d="M0 5.500H7M0 9H7M0 12H7M0 15.500H7" stroke="#111" strokeWidth="2" /><rect x=".5" y="1" width="15" height="2.500" fill="#dce8f4" stroke="#222" /><path d="M12.500 16V6M10.500 8.500L12.500 5.500L14.500 8.500" stroke="#000" /></>],
];
const turns: [string, React.ReactNode][] = [
  ["Rotate counter-clockwise", <path d="M14 1C8 0 3 3 3 9H.8L4.500 15.500L9 9H6.500C6.500 6 9 4 14 3.500Z" fill="#f9b45a" stroke="#c05a00" />],
  ["Rotate clockwise", <path d="M2 1C8 0 13 3 13 9H15.200L11.500 15.500L7 9H9.500C9.500 6 7 4 2 3.500Z" fill="#f9b45a" stroke="#c05a00" />],
  ["Flip horizontal", <path d="M.8 8L5 3.500V6.500H11V3.500L15.200 8L11 12.500V9.500H5V12.500Z" fill="#f9b45a" stroke="#c05a00" />],
  ["Flip vertical", <path d="M8 .8L12.500 5H9.500V11H12.500L8 15.200L3.500 11H6.500V5H3.500Z" fill="#f9b45a" stroke="#c05a00" />],
];
const picks: [string, React.ReactNode][] = [
  ["Select all", <><path d="M2 .5H11V15.500H2Z" fill="#c4daef" stroke="#9bb6d0" /><path d="M4 3.500H10M4 5.500H10M4 7.500H10M4 9.500H10M4 11.500H8" stroke="#6b94bb" /><path d="M9 12.500H12M9 15.500H12M10.500 12.500V15.500" stroke="#222" /></>],
  ["Select all in layers", <><rect x=".8" y=".8" width="14.400" height="14.400" stroke="#000" strokeWidth="1.300" strokeDasharray="2 1.500" /><path d="M3 10H10L13 12H6ZM3 7H10L13 9H6ZM3 4H10L13 6H6Z" fill="#fff" stroke="#444" /></>],
  ["Deselect", <><rect x=".8" y=".8" width="14.400" height="14.400" stroke="#b01818" strokeWidth="1.300" strokeDasharray="2 1.500" /><rect x="3" y="7" width="8" height="6" fill={YEL} stroke="#222" /><circle cx="10" cy="6" r="3.500" fill="#cfdfee" stroke="#334" /></>],
];
const toggles: [string, React.ReactNode][] = [
  ["Scale stroke width", <><path d="M0 2.500H14.500V10" stroke="#000" strokeWidth="3" /><path d="M0 6H10.500V10" stroke="#000" strokeWidth="1.500" /></>],
  ["Scale rounded corners", <><path d="M1 1.500C9 1 15 3 15 10" stroke="#000" strokeWidth="1.300" /><path d="M1 5C7 5 11 6 11 10" stroke="#000" strokeWidth="1.300" /></>],
  ["Move gradients", <path d="M.5 1.500H15V10H11V6H.5Z" fill="#88b4e0" stroke="#222" />],
  ["Move patterns", <><path d="M1 1.500H16M15 1V10" stroke="#000" strokeWidth="1.500" /><path d="M1 4H16M1 7H16" stroke="#000" strokeWidth="2" strokeDasharray="2 2" /></>],
];
function ToolGroup({ items, className = "" }: { items: [string, React.ReactNode][]; className?: string }) {
  return (
    <div className={`flex shrink-0 ${className}`}>
      {items.map(([n, g]) => (
        <button key={n} aria-label={n} className="flex h-[34px] w-[37px] items-center justify-center"><Ic s={16} v={16}>{g}</Ic></button>
      ))}
    </div>
  );
}

const rot = (n: React.ReactNode) => <Ic><g transform="translate(24 0) rotate(90)">{n}</g></Ic>;
const flip = (n: React.ReactNode) => <Ic><g transform="matrix(0 1 1 0 0 0)">{n}</g></Ic>;

export default function App() {
  return (
    <div className="relative flex h-screen w-full flex-col overflow-hidden bg-[#f6f5f4] font-['Noto_Sans','Open_Sans',sans-serif] text-[11px] leading-4 text-[#2e3436]">
      <Defs />
      <header className="flex h-8 shrink-0 items-center border-t border-[#2a1512] bg-[#5e1f17] pl-[9px] text-white">
        <Ic s={16} v={16}>
          <path d="M8 0L16 7.500C16 9 12 9 12 10C12 11 14 11 13 12C11 13 11 14 8 16C5 14 6 13 3 12.500C2 11.500 4 11 4 10C3 9 0 9 0 7.500Z" fill="#15171c" />
          <path d="M8 1L12 5L10 6L8 4.500L6 7L4.500 5Z" fill="#dfe6ee" />
        </Ic>
        <h1 className="ml-[5px] flex-1">*PedalPCB_6_Knob_Type_1_tmp.svg - Inkscape</h1>
        <button aria-label="Minimize" className="flex h-full w-[45px] items-center justify-center"><Ic s={10} v={10}><path d="M0 5.500H10" stroke="#fff" /></Ic></button>
        <button aria-label="Maximize" className="flex h-full w-[45px] items-center justify-center"><Ic s={10} v={10}><rect x=".5" y=".5" width="9" height="9" stroke="#fff" /></Ic></button>
        <button aria-label="Close" className="flex h-full w-[46px] items-center justify-center"><Ic s={10} v={10}><path d="M0 0L10 10M10 0L0 10" stroke="#fff" /></Ic></button>
      </header>

      <nav className="flex h-6 shrink-0 items-center gap-4 border-b border-[#dcdad7] pl-[9px]">
        {menus.map((m) => <button key={m}>{m}</button>)}
      </nav>

      <div className="flex h-[42px] shrink-0 items-center pl-1">
        <ToolGroup items={picks} />
        <div className="ml-[7px]"><VSep /></div>
        <ToolGroup items={turns} className="ml-[6px]" />
        <div className="ml-[7px]"><VSep /></div>
        <ToolGroup items={orders} className="ml-[7px]" />
        <div className="ml-[6px]"><VSep /></div>
        <label htmlFor="X" className="w-6 pr-1 text-right">X:</label>
        <Spin id="X" value="17.282" w="w-[115px]" />
        <label htmlFor="Y" className="w-5 pr-1 text-right">Y:</label>
        <Spin id="Y" value="117.923" w="w-[116px]" />
        <label htmlFor="W" className="w-6 pr-1 text-right">W:</label>
        <Spin id="W" value="193.065" w="w-[112px]" />
        <button aria-label="Lock ratio" className="flex w-[43px] items-center justify-center"><Padlock open /></button>
        <label htmlFor="H" className="w-4 pr-1 text-right">H:</label>
        <Spin id="H" value="105.871" w="w-[112px]" />
        <div className="ml-1"><Drop label="Units" value="px" box="h-[34px] w-[60px]" /></div>
        <div className="ml-[7px] mr-[7px]"><VSep /></div>
        <div className="flex gap-[2px]">
          {toggles.map(([n, g]) => (
            <button key={n} aria-label={n} aria-pressed="true" className="flex h-[34px] w-[35px] items-center justify-center rounded-[5px] border border-[#ccc7c2] bg-[#d6d1cd]">
              <Ic s={18} v={18}>{g}<path d="M3 14.500H14" stroke="#000" strokeWidth="1.500" strokeDasharray="2 1" /><path d="M12 11.500L17 14.500L12 17.500Z" fill="#000" /></Ic>
            </button>
          ))}
        </div>
      </div>

      <main className="flex min-h-0 flex-1 border-l border-[#6b3a33]">
        <div className="flex w-[52px] shrink-0 flex-col items-start pl-1 pt-[3px]">
          {tools.map((t, i) =>
            t === null ? (
              <div key={i} className="flex h-[14px] w-[43px] shrink-0 items-center"><div className="h-px w-full bg-[#d6d3cf]" /></div>
            ) : (
              <button key={i} aria-label={t[0]} className={`flex h-[34px] w-[43px] shrink-0 items-center justify-center rounded-[5px] ${i === 0 ? "border border-[#ccc7c2] bg-[#d6d1cd]" : ""}`}>
                <Ic>{t[1]}</Ic>
              </button>
            ),
          )}
        </div>

        <div className="grid min-w-0 flex-1 grid-cols-[18px_1fr_19px] grid-rows-[18px_1fr_18px]">
          <button aria-label="Lock guides" className="flex items-center justify-center rounded border border-[#d0ccc8]"><Padlock s={17} /></button>
          <HRuler />
          <button aria-label="Zoom on resize" className="flex items-center justify-center rounded border border-[#b5b1ad] bg-[#f6f5f4]">
            <Ic s={10} v={10}><path d="M2 1.500H7.500V9H5V4.500H2Z" fill="#fff" stroke="#999" /></Ic>
          </button>
          <VRuler />
          <Drawing />
          <div className="flex flex-col items-center bg-[#cdcdcd]">
            <div className="mt-[358px] h-[405px] w-[6px] rounded-full bg-[#7e8283]" />
          </div>
          <div />
          <div className="flex items-center bg-[#cdcdcd]">
            <div className="ml-[250px] h-[6px] w-[579px] rounded-full bg-[#7e8283]" />
          </div>
          <button aria-label="Colour management" className="flex items-center justify-center border border-[#d0ccc8] bg-white">
            <svg width="14" height="15" aria-hidden="true"><path d="M2 0C5 0 8 5 13 13L3 15C1 10 0 4 2 0Z" fill="#d8f0dc" /><path d="M3 15L13 13L8 6Z" fill="#f0c8e8" /><path d="M2 9L3 15L7 14Z" fill="#b8c0f4" /></svg>
          </button>
        </div>

        <aside className="flex w-[477px] shrink-0 flex-col">
          <PanelHead className="bg-white" title="Align and Distribute (Shift+Ctrl+A)" icon={<AlignIcon />} />
          <section className="h-[498px] shrink-0 border border-[#c8c4bf] bg-white">
            <h2 className="h-[22px] pl-[3px] pt-[2px] font-bold">Align</h2>
            <div className="flex h-[48px] items-center justify-end pr-[3px]">
              <button aria-label="Move as group" className="ml-[22px]">
                <Ic s={22} v={22}><rect x="1" y="1" width="20" height="20" stroke="#000" strokeWidth="2" strokeDasharray="2 2" /><rect x="6" y="6" width="10" height="10" fill={BLUE} stroke="#111" strokeWidth="1.500" /></Ic>
              </button>
              <span className="flex-1 pr-1 text-right">Relative to:</span>
              <Drop label="Relative to" value="First selected" box="h-12 w-[119px]" />
              <button aria-label="Treat selection as group" className="flex w-11 items-center justify-center">
                <Ic><path d="M3 0V24M21.500 0V24" stroke="#f08a8a" strokeWidth="2" /><Boxes bs={[[4, 5, 17, 7], [8, 9, 9, 6], [6, 15, 12, 7]]} /></Ic>
              </button>
            </div>
            <IconRow className="mt-[14px]" items={[
              ["Align right edges to anchor left", <Ic>{alignShapes[0]}</Ic>],
              ["Align left edges", <Ic>{alignShapes[1]}</Ic>],
              ["Center on vertical axis", <Ic>{alignShapes[2]}</Ic>],
              ["Align right sides", <Ic>{alignShapes[3]}</Ic>],
              ["Align left edges to anchor right", <Ic>{alignShapes[4]}</Ic>],
              ["Align text anchors horizontally", <Letters items={[["a", 6, 8, 15], ["y", 3, 19, 22]]} lines={<path d="M5.500 0V14" stroke={CRIMSON} />} />],
            ]} />
            <IconRow items={[
              ["Align bottom edges to anchor top", rot(alignShapes[0])],
              ["Align top edges", rot(alignShapes[1])],
              ["Center on horizontal axis", rot(alignShapes[2])],
              ["Align bottom edges", rot(alignShapes[3])],
              ["Align top edges to anchor bottom", rot(alignShapes[4])],
              ["Align baselines", <Letters items={[["y", 1, 14, 22], ["a", 14, 14, 17]]} lines={<path d="M0 15H24" stroke={CRIMSON} />} />],
            ]} />
            <h2 className="mt-[16px] h-[20px] pl-[3px] font-bold">Distribute</h2>
            <IconRow items={[
              ["Distribute left edges", <Ic>{distShapes[0]}</Ic>],
              ["Distribute centers horizontally", <Ic>{distShapes[1]}</Ic>],
              ["Distribute right edges", <Ic>{distShapes[2]}</Ic>],
              ["Make horizontal gaps equal", <Ic>{distShapes[3]}</Ic>],
              ["Distribute text anchors horizontally", <Letters items={[["a", 0, 18, 16], ["y", 12, 18, 22]]} lines={<><path d="M.5 0V24M14.500 0V20" stroke={CRIMSON} /><path d="M2 2.500H13M4 .5L2 2.500L4 4.500M11 .5L13 2.500L11 4.500" stroke="#000" /></>} />],
            ]} />
            <IconRow items={[
              ["Distribute top edges", flip(distShapes[0])],
              ["Distribute centers vertically", flip(distShapes[1])],
              ["Distribute bottom edges", flip(distShapes[2])],
              ["Make vertical gaps equal", flip(distShapes[3])],
              ["Distribute baselines", <Letters items={[["y", 11, 9, 21], ["a", 12, 23, 15]]} lines={<><path d="M0 9.500H24M0 23.500H24" stroke={CRIMSON} /><path d="M2.500 11V22M.5 13L2.500 11L4.500 13M.5 20L2.500 22L4.500 20" stroke="#000" /></>} />],
            ]} />
            <h2 className="mt-[44px] h-[20px] pl-[3px] font-bold">Rearrange</h2>
            <IconRow items={[
              ["Arrange connector network", <Ic><path d="M2 7L8 3L12 10L10 19L3 18ZM12 10L18 9L22 3M18 9L22 18" stroke="#333" />{[[2, 7], [8, 3], [12, 10], [10, 19], [3, 18], [18, 9], [22, 4], [22, 18]].map(([x, y]) => <circle key={`${x}.${y}`} cx={x} cy={y} r="1.500" fill="#aab" stroke="#2a2ae8" />)}</Ic>],
              ["Exchange positions", <Ic><path d="M10 5.500H18V11M5.500 10V17.500H13M4 13L5.500 10.500L7 13M16.500 9L18 11.500L19.500 9" stroke="#111" /><Boxes bs={[[0, 1, 11, 10], [13, 12, 11, 10]]} /></Ic>],
              ["Exchange by z-order", <Ic><path d="M8 5.500H18V9M5 9V13H14" stroke="#111" /><Boxes bs={[[1, 1, 9, 8], [14, 8, 9, 8]]} /><path d="M5 15.500H12M1 18.500H12M5 21.500H10" stroke="#d01c1c" strokeWidth="2" /><path d="M3 16.500H9M4 20H12" stroke="#222" /></Ic>],
              ["Exchange around center", <Ic><path d="M8 5.500H18V9M5 9V12H14" stroke="#111" /><Boxes bs={[[1, 1, 9, 8], [14, 8, 9, 8]]} /><circle cx="7" cy="17" r="4.500" stroke="#d01c1c" strokeWidth="1.500" strokeDasharray="2 1.500" /></Ic>],
              ["Randomize centers", <Ic><Boxes f={YEL} bs={[[0, 2, 7, 6], [12, 0, 7, 6], [17, 7, 7, 6], [9, 10, 7, 6], [0, 18, 7, 6], [10, 17, 7, 6]]} /></Ic>],
              ["Unclump objects", <Ic><path d="M9 9L17 4M9 13L17 19M20.500 9V17" stroke="#d01c1c" strokeDasharray="4 1" /><B b={[0, 7, 9, 8]} f={YEL} /><B b={[17, 2, 7, 8]} f={YEL} /><B b={[17, 18, 7, 6]} f={YEL} /></Ic>],
            ]} />
            <h2 className="mt-[44px] h-[20px] pl-[3px] font-bold">Remove overlaps</h2>
            <div className="flex h-[34px] items-center justify-end pr-[3px]">
              <label htmlFor="horizontal gap" className="pr-[3px]">H:</label>
              <Spin id="horizontal gap" value="0.0" w="w-[81px]" />
              <label htmlFor="vertical gap" className="w-4 pr-[2px] text-right">V:</label>
              <Spin id="vertical gap" value="0.0" w="w-[81px]" />
              <button aria-label="Remove overlaps" className="ml-[3px] flex w-11 items-center justify-center">
                <Ic><Boxes bs={[[0, 0, 7, 8], [0, 10, 7, 13], [9, 0, 7, 23], [19, 0, 5, 23]]} /></Ic>
              </button>
            </div>
          </section>

          <div className="flex shrink-0 flex-col overflow-hidden rounded-[5px] border-x border-[#c8c4bf]">
            {docked.map(([n, g], i) => (
              <button key={n} className={`flex h-[34px] items-center border-b-2 border-[#c4bfba] pl-2 pr-[10px] text-left ${i === 0 ? "bg-[#d6d1cd]" : "bg-gradient-to-b from-[#f7f6f5] to-[#ebe9e7]"}`}>
                <span className="flex w-[20px] items-center">{g}</span>
                <span className="flex-1">{n}</span>
                <Ic s={12} v={12}><path d="M2 8.500L6 4.500L10 8.500" stroke="#2e3436" strokeWidth="1.800" /></Ic>
              </button>
            ))}
          </div>

          <PanelHead className="mt-px border-t border-[#c8c4bf]" title="Transform (Shift+Ctrl+M)" icon={<TransformIcon />} />
          <section className="h-[214px] shrink-0 border-2 border-t border-[#cfcbc6] px-[2px] pt-[3px]">
            <div className="border border-[#c8c4bf] bg-white">
              <div role="tablist" className="flex h-[38px] border-b border-[#c8c4bf] bg-[#e1dedb] pl-2">
                {["Move", "Scale", "Rotate", "Skew", "Matrix"].map((t, i) => (
                  <button key={t} role="tab" aria-selected={i === 0} className={`mr-[10px] px-3 ${i === 0 ? "border-b-[3px] border-[#3584e4] pt-[3px]" : ""}`}>{t}</button>
                ))}
              </div>
              <div className="flex h-[38px] items-center pl-[10px] pt-[4px]">
                <Ic><B b={[0, 2, 9, 9]} c="#999" f="#eef3f9" /><B b={[14, 2, 10, 9]} /><path d="M4 17.500H18M16 15.500L19 17.500L16 19.500" stroke="#000" /></Ic>
                <label htmlFor="Horizontal" className="w-16 pl-[6px]">Horizontal:</label>
                <Spin id="Horizontal" value="0.000" w="w-[116px] ml-[6px]" />
                <div className="ml-[10px]"><Drop label="Move units" value="px" box="h-[34px] w-[60px]" /></div>
              </div>
              <div className="flex h-[38px] items-center pl-[10px] pt-[4px]">
                <Ic><B b={[2, 1, 9, 9]} c="#999" f="#eef3f9" /><B b={[2, 14, 9, 9]} /><path d="M17.500 5V20M15.500 17.500L17.500 20.500L19.500 17.500" stroke="#000" /></Ic>
                <label htmlFor="Vertical" className="w-16 pl-[6px]">Vertical:</label>
                <Spin id="Vertical" value="0.000" w="w-[116px] ml-[6px]" />
              </div>
              <label className="flex h-[27px] items-center gap-1 pl-2">
                <Tick />Relative move
              </label>
            </div>
            <label className="flex h-[22px] items-center gap-1 pl-1">
              <Tick />Apply to each object separately
            </label>
            <div className="mt-[3px] flex justify-end gap-[6px] pr-1">
              {["Clear", "Apply"].map((t) => (
                <button key={t} className="h-[34px] w-[85px] rounded-[5px] border border-[#c8c4bf] bg-gradient-to-b from-[#f7f6f5] to-[#ebe9e7] shadow-sm">{t}</button>
              ))}
            </div>
          </section>
        </aside>

        <SideBar items={commands} className="w-[45px]" />
        <SideBar items={snaps} className="w-[44px]" />
      </main>

      <div className="flex h-[34px] shrink-0">
        <div className="flex min-w-0 flex-1 flex-col overflow-hidden bg-[#cdcdcd]">
          <div className="flex h-[21px] shrink-0">
            <button aria-label="No colour" className="w-5 shrink-0 bg-white">
              <svg width="20" height="21" className="block" aria-hidden="true"><path d="M0 0L20 21M20 0L0 21" stroke="#5a0d0d" strokeWidth="1.500" /></svg>
            </button>
            {palette.map((c, i) => (
              <button key={i} aria-label={`#${c}`} className="w-[19px] shrink-0" style={{ backgroundColor: `#${c}` }} />
            ))}
          </div>
          <div className="ml-1 mt-[4px] h-[6px] w-[325px] rounded-full bg-[#7e8283]" />
        </div>
        <button aria-label="Palette menu" className="flex w-9 shrink-0 items-center justify-center">
          <svg width="5" height="9" aria-hidden="true"><path d="M5 0V9L0 4.500Z" fill="#2e3436" /></svg>
        </button>
      </div>

      <footer className="flex h-[34px] shrink-0 items-center border-l border-[#6b3a33] pl-[2px] text-[12px]">
        <div className="grid w-[108px] grid-cols-[38px_1fr] grid-rows-[17px_17px] items-center text-[11px]">
          <span>Fill:</span>
          <span className="flex items-center gap-[2px]"><b>m</b><span className="h-4 w-8 rounded-sm bg-black" /></span>
          <span>Stroke:</span>
          <span className="whitespace-nowrap"><b>m</b> <i>None</i> 1.00</span>
        </div>
        <label htmlFor="opacity" className="w-4 pr-[2px] text-right text-[11px]">O:</label>
        <Spin id="opacity" value="100" w="w-[67px]" dim />
        <div className="ml-[3px]"><VSep /></div>
        <button aria-label="Toggle layer visibility" className="flex w-[38px] items-center justify-center">
          <Ic s={18} v={18}><path d="M1 10C5 5 13 5 17 10C13 15 5 15 1 10Z" fill="#fff" stroke="#222" strokeWidth="1.500" /><circle cx="9" cy="10" r="3.500" fill="#222" /><path d="M3 6L1.500 3.500M6 4.500L5 1.500M9 4V1M12 4.500L13 1.500M15 6L16.500 3.500" stroke="#222" strokeWidth="1.300" /></Ic>
        </button>
        <button aria-label="Toggle layer lock" className="mr-[5px] flex w-[30px] items-center justify-center pl-[2px]"><Padlock open /></button>
        <Drop label="Layer" value="•COLOR" box="h-[34px] w-[149px]" pad="pl-[10px]" />
        <p className="ml-[2px] flex-1 truncate"><b>5</b> objects selected of type <b>Text</b> in layer <b>COLOR</b>. Click selection to toggle scale/rotation handles (or Shift+s).</p>
        <VSep />
        <div className="grid w-[73px] grid-cols-[20px_1fr] grid-rows-[17px_17px] items-center pl-[10px]">
          <span>X:</span><span className="text-right">343.33</span>
          <span>Y:</span><span className="text-right">-11.25</span>
        </div>
        <label htmlFor="zoom" className="w-[30px] pl-[10px]">Z:</label>
        <Spin id="zoom" value="240%" w="w-[93px]" right />
        <label htmlFor="rotation" className="w-[32px] pl-[11px]">R:</label>
        <Spin id="rotation" value="0.00°" w="w-[100px] mr-[10px]" right />
      </footer>

      <svg className="pointer-events-none absolute left-0 top-0 h-full w-full" fill="none" aria-hidden="true">
        <text x="888" y="961" fontSize="42" fill="#e32227">Text Objects</text>
        <path d="M882 949L798 1034L568 1283" stroke="#e32227" strokeWidth="4.500" />
        <ellipse cx="519.500" cy="1302" rx="126" ry="18.500" stroke="#e32227" strokeWidth="5" />
      </svg>
    </div>
  );
}

function Tick() {
  return (
    <span className="relative flex h-4 w-4">
      <input type="checkbox" defaultChecked className="h-4 w-4 appearance-none rounded-[3px] bg-[#3f8ae0]" />
      <svg width="16" height="16" className="pointer-events-none absolute left-0 top-0" fill="none" aria-hidden="true">
        <path d="M3.500 8L7 11.500L13 5" stroke="#fff" strokeWidth="2.400" />
      </svg>
    </span>
  );
}
